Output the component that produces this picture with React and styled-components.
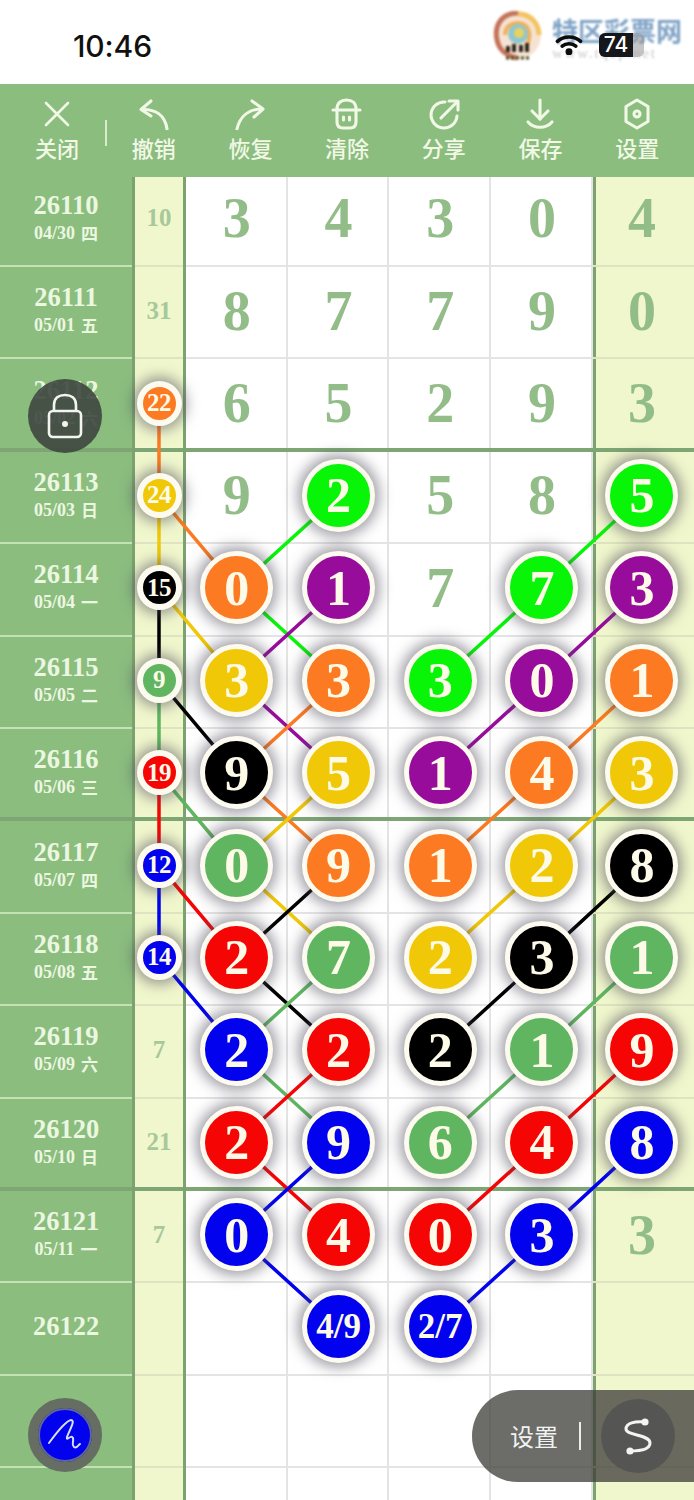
import React from "react";
import styled, { createGlobalStyle } from "styled-components";

const Global = createGlobalStyle`
  html, body { margin: 0; padding: 0; background: #fff; }
  * { box-sizing: border-box; }
`;

const COLORS = {
  O: "#fb7a22",
  Y: "#f0c808",
  G: "#08f508",
  P: "#980c9c",
  K: "#000000",
  M: "#5fb560",
  R: "#f60505",
  B: "#0202ee",
};

const ROW_H = 92.4;
const COL_X = { s: 159, a: 236.85, b: 338.55, c: 440.25, d: 541.95, e: 642 };
const rowY = (r) => ROW_H * r + (ROW_H - 5) / 2;

const rows = [
  { id: "26110", date: "04/30", wk: "四", side: "10", cells: ["3", "4", "3", "0", "4"] },
  { id: "26111", date: "05/01", wk: "五", side: "31", cells: ["8", "7", "7", "9", "0"] },
  { id: "26112", date: "05/02", wk: "六", side: ["22", "O"], cells: ["6", "5", "2", "9", "3"] },
  { id: "26113", date: "05/03", wk: "日", side: ["24", "Y"], cells: ["9", ["2", "G"], "5", "8", ["5", "G"]] },
  { id: "26114", date: "05/04", wk: "一", side: ["15", "K"], cells: [["0", "O"], ["1", "P"], "7", ["7", "G"], ["3", "P"]] },
  { id: "26115", date: "05/05", wk: "二", side: ["9", "M"], cells: [["3", "Y"], ["3", "O"], ["3", "G"], ["0", "P"], ["1", "O"]] },
  { id: "26116", date: "05/06", wk: "三", side: ["19", "R"], cells: [["9", "K"], ["5", "Y"], ["1", "P"], ["4", "O"], ["3", "Y"]] },
  { id: "26117", date: "05/07", wk: "四", side: ["12", "B"], cells: [["0", "M"], ["9", "O"], ["1", "O"], ["2", "Y"], ["8", "K"]] },
  { id: "26118", date: "05/08", wk: "五", side: ["14", "B"], cells: [["2", "R"], ["7", "M"], ["2", "Y"], ["3", "K"], ["1", "M"]] },
  { id: "26119", date: "05/09", wk: "六", side: "7", cells: [["2", "B"], ["2", "R"], ["2", "K"], ["1", "M"], ["9", "R"]] },
  { id: "26120", date: "05/10", wk: "日", side: "21", cells: [["2", "R"], ["9", "B"], ["6", "M"], ["4", "R"], ["8", "B"]] },
  { id: "26121", date: "05/11", wk: "一", side: "7", cells: [["0", "B"], ["4", "R"], ["0", "R"], ["3", "B"], "3"] },
  { id: "26122", cells: ["", ["4/9", "B"], ["2/7", "B"], "", ""] },
  { cells: ["", "", "", "", ""] },
  { cells: ["", "", "", "", ""] },
];

const THICK = new Set([2, 6, 10]);

const vees = [
  ["G", 3], ["P", 4], ["O", 5], ["Y", 6], ["K", 7], ["M", 8], ["R", 9], ["B", 10],
];
const tails = [["O", 2], ["Y", 3], ["K", 4], ["M", 5], ["R", 6], ["B", 7]];

const Page = styled.div`
  position: relative;
  width: 694px;
  height: 1500px;
  overflow: hidden;
  background: #fff;
  font-family: "Liberation Serif", "Noto Sans CJK SC", serif;
`;

const StatusBar = styled.div`
  position: relative;
  height: 84px;
  background: #fff;
  display: flex;
  align-items: center;
  padding: 8px 0 0 73px;
`;

const Clock = styled.div`
  font-family: "Inter", "Liberation Sans", sans-serif;
  font-size: 30px;
  font-weight: 500;
  letter-spacing: -0.1px;
  color: #111;
`;

const Watermark = styled.div`
  position: absolute;
  left: 493px;
  top: 11px;
  width: 195px;
  height: 60px;
  display: flex;
  gap: 9px;
  filter: blur(0.8px);
`;

const WatermarkText = styled.div`
  display: flex;
  flex-direction: column;
  padding-top: 4px;
`;

const WatermarkTitle = styled.div`
  font-family: "Noto Sans CJK SC", sans-serif;
  font-weight: 700;
  font-size: 26px;
  line-height: 30px;
  color: #7fa3c6;
  white-space: nowrap;
`;

const WatermarkUrl = styled.div`
  font-size: 15px;
  line-height: 17px;
  letter-spacing: 1.8px;
  color: #c9c9c9;
  white-space: nowrap;
`;

const StatusIcons = styled.div`
  position: absolute;
  left: 555px;
  top: 33px;
  display: flex;
  align-items: center;
  gap: 16px;
`;

const Battery = styled.div`
  width: 45px;
  height: 24px;
  border-radius: 6px;
  overflow: hidden;
  display: flex;
  background: rgba(150, 150, 150, 0.55);
`;

const BatteryFill = styled.div`
  width: 34px;
  background: #16171a;
  color: #fff;
  font-family: "Inter", "Liberation Sans", sans-serif;
  font-size: 21px;
  font-weight: 500;
  line-height: 24px;
  text-align: center;
`;

const Toolbar = styled.div`
  position: relative;
  z-index: 5;
  height: 93px;
  background: #8bbd7f;
  display: flex;
  padding-left: 8.7px;
`;

const Tool = styled.div`
  position: relative;
  width: 96.7px;
  display: flex;
  flex-direction: column;
  align-items: center;
  padding-top: 14px;
  gap: 2px;
  color: #f2f8e6;

  ${(p) =>
    p.$sep &&
    `&::after {
      content: "";
      position: absolute;
      left: 96.3px;
      top: 36px;
      width: 2px;
      height: 26px;
      background: #dcebce;
    }`}
`;

const ToolLabel = styled.div`
  font-family: "Noto Sans CJK SC", sans-serif;
  font-size: 22px;
  line-height: 30px;
  font-weight: 500;
`;

const Board = styled.div`
  position: relative;
  margin-top: -2.4px;
  display: grid;
  grid-template-columns: 135px 51px repeat(4, 101.7px) 1fr;
  grid-auto-rows: ${ROW_H}px;
`;

const lineFor = (p) =>
  p.$thick ? "inset 0 -4px 0 #7ea674" : `inset 0 -2px 0 ${p.$line}`;

const IdCell = styled.div`
  background: #8bbd7f;
  border-right: 3px solid #7ba26f;
  box-shadow: ${(p) => lineFor({ ...p, $line: "#c4e2b4" })};
  padding-bottom: 7px;
  display: flex;
  flex-direction: column;
  align-items: center;
  justify-content: center;
  font-weight: 700;
  color: #ecf7e0;
`;

const IdNumber = styled.div`
  font-size: 26.5px;
  line-height: 30px;
`;

const IdDate = styled.div`
  font-size: 18px;
  line-height: 24px;
  margin-top: 1px;
  display: flex;
  gap: 6px;
  align-items: center;
`;

const Weekday = styled.span`
  font-family: "Noto Sans CJK SC", sans-serif;
  font-size: 17px;
  font-weight: 700;
`;

const SideCell = styled.div`
  background: #f1f7cd;
  border-right: 3px solid #7ba26f;
  box-shadow: ${(p) => lineFor({ ...p, $line: "#e0e3c2" })};
  padding-bottom: 5px;
  display: flex;
  align-items: center;
  justify-content: center;
  font-weight: 700;
  font-size: 25px;
  color: #a6c89a;
`;

const NumCell = styled.div`
  background: ${(p) => (p.$last ? "#f1f7cd" : "#fff")};
  box-shadow: ${(p) => lineFor({ ...p, $line: p.$last ? "#e0e3c2" : "#e4e4e4" })},
    ${(p) => (p.$last ? "inset 3px 0 0 #7ba26f" : "inset -2px 0 0 #e4e4e4")};
  padding-bottom: 5px;
  padding-right: ${(p) => (p.$last ? "3px" : "0")};
  display: flex;
  align-items: center;
  justify-content: center;
  font-weight: 700;
  font-size: 56px;
  color: #93bd88;
`;

const Lines = styled.svg`
  position: absolute;
  inset: 0;
  width: 100%;
  height: 100%;
  z-index: 1;
  pointer-events: none;
`;

const Ball = styled.div`
  position: relative;
  z-index: 2;
  flex: none;
  width: ${(p) => (p.$small ? 45 : 73)}px;
  height: ${(p) => (p.$small ? 45 : 73)}px;
  border-radius: 50%;
  background: ${(p) => p.$color};
  border: ${(p) => (p.$small ? 6 : 5)}px solid #fdfbf0;
  box-shadow: 0 0 14px 4px rgba(70, 70, 85, 0.55);
  display: flex;
  align-items: center;
  justify-content: center;
  color: #fdfbe8;
  font-weight: 700;
  font-size: ${(p) => (p.$small ? 25 : p.$long ? 35 : 50)}px;
  letter-spacing: ${(p) => (p.$small ? "-0.5px" : "0")};
  white-space: nowrap;
`;

const FloatButton = styled.div`
  position: absolute;
  z-index: 6;
  left: 28px;
  top: ${(p) => p.$top}px;
  width: 74px;
  height: 74px;
  border-radius: 50%;
  display: flex;
  align-items: center;
  justify-content: center;
`;

const LockButton = styled(FloatButton)`
  background: rgba(62, 70, 64, 0.9);
`;

const PenButton = styled(FloatButton)`
  background: #0202ee;
  border: 10px solid #666e63;
  outline: 2px solid rgba(110, 115, 130, 0.9);
  outline-offset: -12px;
`;

const SettingsPill = styled.div`
  position: absolute;
  z-index: 6;
  left: 472px;
  top: 1390px;
  width: 222px;
  height: 92px;
  border-radius: 46px 0 0 46px;
  background: rgba(62, 62, 58, 0.76);
  display: flex;
  align-items: center;
  padding-left: 38px;
  color: #f2f2f2;
`;

const PillLabel = styled.div`
  font-family: "Noto Sans CJK SC", sans-serif;
  font-size: 24px;
  line-height: 30px;
`;

const PillSep = styled.div`
  width: 2px;
  height: 28px;
  margin-left: 21px;
  background: #ececec;
`;

const PillKnob = styled.div`
  width: 74px;
  height: 74px;
  margin-left: 20px;
  border-radius: 50%;
  background: #555653;
  display: flex;
  align-items: center;
  justify-content: center;
`;

const iconProps = {
  width: 32,
  height: 32,
  viewBox: "0 0 32 32",
  fill: "none",
  stroke: "currentColor",
  strokeWidth: 3.1,
  strokeLinecap: "round",
  strokeLinejoin: "round",
};

const tools = [
  {
    label: "关闭",
    icon: (
      <svg {...iconProps} strokeWidth={2.6}>
        <path d="M5 5 L27 27 M27 5 L5 27" />
      </svg>
    ),
  },
  {
    label: "撤销",
    icon: (
      <svg {...iconProps}>
        <path d="M13 3 L3 11.5 L13 18" />
        <path d="M4 11.5 C17 11 27 17 29 31" />
      </svg>
    ),
  },
  {
    label: "恢复",
    icon: (
      <svg {...iconProps}>
        <path d="M18 3 L29 11 L20 19" />
        <path d="M28 11 C15 11 6 18 3 31" />
      </svg>
    ),
  },
  {
    label: "清除",
    icon: (
      <svg {...iconProps}>
        <path d="M6 11 C6 5 10 2 15.5 2 C21 2 25 5 25 11" />
        <path d="M2 12 H29" />
        <path d="M6 12 V24 C6 28 8 30 12 30 H19 C23 30 25 28 25 24 V12" />
        <path d="M12.5 19 V22 M18.5 19 V22" />
      </svg>
    ),
  },
  {
    label: "分享",
    icon: (
      <svg {...iconProps}>
        <path d="M17 4 A13 13 0 1 0 29 18" />
        <path d="M13 20 L29 4" />
        <path d="M21 3 H30 V12" />
      </svg>
    ),
  },
  {
    label: "保存",
    icon: (
      <svg {...iconProps}>
        <path d="M16 2 V21" />
        <path d="M8 13 L16 21 L24 13" />
        <path d="M4 24 C10 31 22 31 28 24" />
      </svg>
    ),
  },
  {
    label: "设置",
    icon: (
      <svg {...iconProps}>
        <path d="M16 2 L27 8.5 V23.5 L16 30 L5 23.5 V8.5 Z" />
        <circle cx="16" cy="16" r="3" />
      </svg>
    ),
  },
];

function LogoMark() {
  return (
    <svg width="50" height="50" viewBox="0 0 50 50" fill="none" style={{ flex: "none" }}>
      <ellipse cx="25" cy="24" rx="23" ry="24" fill="#f6e2d2" />
      <path d="M25 2 C8 2 1 15 4 29 C6 39 14 45 24 47" stroke="#c4745a" strokeWidth="5" />
      <path d="M25 3 C38 3 46 13 46 24" stroke="#f3c45f" strokeWidth="5" />
      <path d="M12 24 C12 14 22 10 30 13 C37 16 38 26 34 34" stroke="#f0b15a" strokeWidth="4" />
      <circle cx="25" cy="23" r="10" fill="#8fc7cf" />
      <circle cx="26" cy="22" r="5" fill="#e8d25e" />
      <path d="M15 41 V35 M21 41 V33 M28 41 V34 M34 41 V32" stroke="#2b2418" strokeWidth="4" />
      <path d="M13 47 H38" stroke="#4a4a20" strokeWidth="3" strokeDasharray="3 2" />
    </svg>
  );
}

function Wifi() {
  return (
    <svg width="28" height="20" viewBox="0 0 26 19" fill="none" stroke="#0c0c0c" strokeWidth="3.4" strokeLinecap="round">
      <path d="M2 6 C8 0.5 18 0.5 24 6" />
      <path d="M6.5 10.5 C10 7.5 16 7.5 19.5 10.5" />
      <circle cx="13" cy="16" r="1.6" fill="#0c0c0c" />
    </svg>
  );
}

function SeriesLines() {
  const segs = [];
  vees.forEach(([c, k]) => {
    segs.push({ c, p: `M${COL_X.b} ${rowY(k)} L${COL_X.a} ${rowY(k + 1)} L${COL_X.b} ${rowY(k + 2)}` });
    segs.push({ c, p: `M${COL_X.e} ${rowY(k)} L${COL_X.d} ${rowY(k + 1)} L${COL_X.c} ${rowY(k + 2)}` });
  });
  tails.forEach(([c, k]) => {
    segs.push({ c, p: `M${COL_X.s} ${rowY(k)} L${COL_X.s} ${rowY(k + 1)} L${COL_X.a} ${rowY(k + 2)}` });
  });
  return (
    <Lines>
      {segs.map((s, i) => (
        <path key={i} d={s.p} fill="none" stroke={COLORS[s.c]} strokeWidth="3.5" />
      ))}
    </Lines>
  );
}

const renderValue = (v, small) => {
  if (Array.isArray(v)) {
    return (
      <Ball $small={small} $long={v[0].length > 1} $color={COLORS[v[1]]}>
        {v[0]}
      </Ball>
    );
  }
  return v;
};

export default function App() {
  return (
    <Page>
      <Global />
      <StatusBar>
        <Clock>10:46</Clock>
        <Watermark>
          <LogoMark />
          <WatermarkText>
            <WatermarkTitle>特区彩票网</WatermarkTitle>
            <WatermarkUrl>www.tqcp.net</WatermarkUrl>
          </WatermarkText>
        </Watermark>
        <StatusIcons>
          <Wifi />
          <Battery>
            <BatteryFill>74</BatteryFill>
          </Battery>
        </StatusIcons>
      </StatusBar>

      <Toolbar>
        {tools.map((t, i) => (
          <Tool key={t.label} $sep={i === 0}>
            {t.icon}
            <ToolLabel>{t.label}</ToolLabel>
          </Tool>
        ))}
      </Toolbar>

      <Board>
        <SeriesLines />
        {rows.map((r, i) => {
          const thick = THICK.has(i);
          return (
            <React.Fragment key={i}>
              <IdCell $thick={thick}>
                {r.id && <IdNumber>{r.id}</IdNumber>}
                {r.date && (
                  <IdDate>
                    {r.date}
                    <Weekday>{r.wk}</Weekday>
                  </IdDate>
                )}
              </IdCell>
              <SideCell $thick={thick}>{renderValue(r.side, true)}</SideCell>
              {r.cells.map((v, j) => (
                <NumCell key={j} $thick={thick} $last={j === 4}>
                  {renderValue(v, false)}
                </NumCell>
              ))}
            </React.Fragment>
          );
        })}
      </Board>

      <LockButton $top={379}>
        <svg width="36" height="46" viewBox="0 0 36 46" fill="none" stroke="#f4f4f0" strokeWidth="2.6">
          <path d="M7 18 V12 C7 5 12 2 18 2 C24 2 29 5 29 12 V18" />
          <rect x="2" y="18" width="32" height="26" rx="4" />
          <circle cx="18" cy="31" r="3" fill="#f4f4f0" stroke="none" />
        </svg>
      </LockButton>

      <PenButton $top={1398}>
        <svg width="38" height="38" viewBox="0 0 38 38" fill="none" stroke="#d8e0f8" strokeWidth="2" strokeLinecap="round" strokeLinejoin="round">
          <path d="M3 27 C11 16 20 5 25 4 C30 4 23 15 21 21 C20 26 25 18 27 22 C28 26 25 28 28 31 C31 33 33 28 34 28" />
        </svg>
      </PenButton>

      <SettingsPill>
        <PillLabel>设置</PillLabel>
        <PillSep />
        <PillKnob>
          <svg width="44" height="44" viewBox="0 0 44 44" fill="none" stroke="#f4f4f4" strokeWidth="3" strokeLinecap="round">
            <path d="M29 8 C19 7 10 9 10 15 C10 22 34 20 34 29 C34 35 24 37 14 37" />
            <circle cx="29" cy="8" r="3.6" fill="#f4f4f4" stroke="none" />
            <circle cx="14" cy="37" r="3.6" fill="#f4f4f4" stroke="none" />
          </svg>
        </PillKnob>
      </SettingsPill>
    </Page>
  );
}
